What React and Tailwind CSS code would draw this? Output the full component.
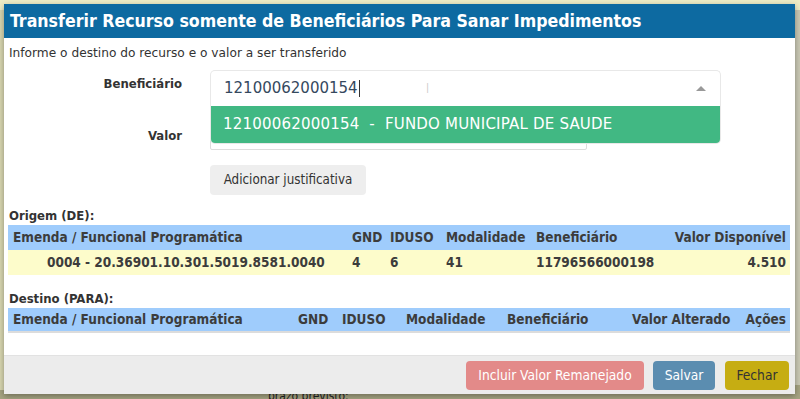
import React from "react";

function Th({ children, className = "" }) {
  return <div className={"pl-[5px] whitespace-nowrap " + className}>{children}</div>;
}

export default function App() {
  return (
    <div className="relative w-[800px] h-[399px] overflow-hidden bg-[#c9c8b4] font-['DejaVu_Sans_Condensed','DejaVu_Sans',sans-serif] font-stretch-condensed text-[#333]">
      {/* page behind the overlay */}
      <div className="absolute left-0 top-0 w-[800px] h-[10px] bg-[#eeedc6]" />
      <div className="absolute left-0 top-[385px] w-[800px] h-[14px] bg-[#a6a482]" />
      <div className="absolute left-[268px] top-[389px] text-[12px] leading-[14px] text-[#222] whitespace-nowrap">prazo previsto:</div>
      <div className="absolute left-0 top-[10px] w-[4px] h-[380px] bg-[#d8d6b0]" />

      {/* modal */}
      <div className="absolute left-[4px] top-[4px] w-[791px] h-[390px] bg-white flex flex-col shadow-[0_2px_6px_rgba(0,0,0,0.35)]">
        <div className="h-[34px] shrink-0 bg-[#0d6aa1] px-[6px] flex items-center text-white font-bold text-[17.6px] whitespace-nowrap">
          Transferir Recurso somente de Beneficiários Para Sanar Impedimentos
        </div>

        <div className="flex-1 flex flex-col px-[4px]">
          <div className="pt-[7px] pl-[1px] text-[12.2px] leading-[16px] text-[#333] font-['DejaVu_Sans',sans-serif] font-stretch-normal">
            Informe o destino do recurso e o valor a ser transferido
          </div>

          {/* Beneficiario row */}
          <div className="mt-[9px] flex items-start">
            <div className="w-[174px] text-right font-bold text-[13px] leading-[16px] pt-[6px]">Beneficiário</div>
            <div className="ml-[28px] relative w-[511px]">
              <div className="h-[36px] border border-[#e8e8e8] border-b-0 rounded-t-[5px] bg-white flex items-center pl-[13px] pr-[14px] font-['DejaVu_Sans',sans-serif] font-stretch-normal">
                <span className="text-[15px] text-[#35495e]">12100062000154</span>
                <span className="w-px h-[17px] bg-[#333] ml-[1px]" />
                <span className="ml-[66px] text-[#c4c4c4] text-[14px] font-light">I</span>
                <span className="ml-auto w-0 h-0 border-l-[5px] border-r-[5px] border-b-[5px] border-l-transparent border-r-transparent border-b-[#999]" />
              </div>
              <div className="absolute left-0 top-[36px] w-[511px] z-10 bg-white border border-[#e8e8e8] border-t-0 rounded-b-[5px]">
                <div className="h-[37px] bg-[#41b883] rounded-b-[4px] flex items-center pl-[12px] text-white text-[15px] tracking-[0.2px] whitespace-pre font-['DejaVu_Sans',sans-serif] font-stretch-normal">
                  12100062000154  -  FUNDO MUNICIPAL DE SAUDE
                </div>
              </div>
            </div>
          </div>

          {/* Valor row */}
          <div className="mt-[12px] flex items-start">
            <div className="w-[174px] text-right font-bold text-[13px] leading-[16px] pt-[10px]">Valor</div>
            <div className="ml-[28px] w-[377px] h-[32px] border border-[#ddd] rounded-[2px] bg-white" />
          </div>

          <div className="mt-[15px] ml-[202px]">
            <button className="h-[30px] w-[156px] rounded-[4px] bg-[#eeeeee] text-[13.3px] text-[#333] flex items-center justify-center">
              Adicionar justificativa
            </button>
          </div>

          {/* Origem */}
          <div className="mt-[13px] pl-[1px] font-bold text-[13px] leading-[16px]">Origem (DE):</div>
          <div className="mt-[1px] w-[782px] font-bold text-[13.5px] text-[#3c3c3c]">
            <div className="h-[25px] bg-[#9fccfc] grid grid-cols-[339px_38px_56px_90px_1fr_auto] items-center">
              <Th>Emenda / Funcional Programática</Th>
              <Th>GND</Th>
              <Th>IDUSO</Th>
              <Th>Modalidade</Th>
              <Th>Beneficiário</Th>
              <div className="pr-[4px] text-right whitespace-nowrap">Valor Disponível</div>
            </div>
            <div className="h-[25px] bg-[#fdfccb] grid grid-cols-[339px_38px_56px_90px_1fr_auto] items-center">
              <div className="pl-[39px] whitespace-nowrap">0004 - 20.36901.10.301.5019.8581.0040</div>
              <Th>4</Th>
              <Th>6</Th>
              <Th>41</Th>
              <Th>11796566000198</Th>
              <div className="pr-[4px] text-right">4.510</div>
            </div>
          </div>

          {/* Destino */}
          <div className="mt-[16px] pl-[1px] font-bold text-[13px] leading-[16px]">Destino (PARA):</div>
          <div className="mt-[1px] w-[782px] font-bold text-[13.5px] text-[#3c3c3c]">
            <div className="h-[23px] bg-[#9fccfc] border-b-[2px] border-[#dcdcdc] box-content grid grid-cols-[285px_44px_64px_101px_125px_114px_1fr] items-center">
              <Th>Emenda / Funcional Programática</Th>
              <Th>GND</Th>
              <Th>IDUSO</Th>
              <Th>Modalidade</Th>
              <Th>Beneficiário</Th>
              <Th>Valor Alterado</Th>
              <div className="pr-[4px] text-right">Ações</div>
            </div>
          </div>
        </div>

        {/* footer */}
        <div className="h-[39px] shrink-0 bg-[#ececec] border-t border-[#e2e2e2] flex items-center justify-end pr-[6px] gap-[9px] text-[13.7px]">
          <button className="h-[29px] w-[178px] rounded-[4px] bg-[#e38a89] text-white">Incluir Valor Remanejado</button>
          <button className="h-[29px] w-[62px] rounded-[4px] bg-[#5b8db0] text-white">Salvar</button>
          <button className="h-[29px] w-[64px] ml-[1px] rounded-[4px] bg-[#c6ad12] text-[#333]">Fechar</button>
        </div>
      </div>
    </div>
  );
}
